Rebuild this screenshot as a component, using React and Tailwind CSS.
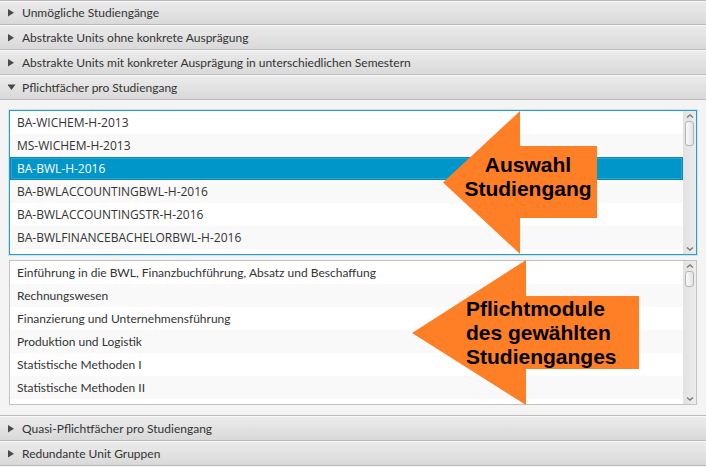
import { useState } from "react";
import clsx from "clsx";

const programmes = [
  "BA-WICHEM-H-2013",
  "MS-WICHEM-H-2013",
  "BA-BWL-H-2016",
  "BA-BWLACCOUNTINGBWL-H-2016",
  "BA-BWLACCOUNTINGSTR-H-2016",
  "BA-BWLFINANCEBACHELORBWL-H-2016",
];

const modules = [
  "Einführung in die BWL, Finanzbuchführung, Absatz und Beschaffung",
  "Rechnungswesen",
  "Finanzierung und Unternehmensführung",
  "Produktion und Logistik",
  "Statistische Methoden I",
  "Statistische Methoden II",
];

function TitledPane({ title, open = false, children }) {
  return (
    <section className="group">
      <h2>
        <button
          type="button"
          aria-expanded={open}
          className="flex h-[25px] w-full items-center border-b border-[#bdb9bd] bg-linear-to-b from-[#ececec] to-[#d9d9d9] pt-0.5 pl-2 text-left shadow-[inset_0_1px_0_#f8f8f8] group-first:border-t group-first:pt-px"
        >
          <svg viewBox="0 0 8 8" className="mr-1.5 size-2 shrink-0 fill-[#4a4a4a]" aria-hidden="true">
            {open ? <path d="M-0.5 0.5H7.5L3.5 6Z" /> : <path d="M0 0V7.5L6 3.75Z" />}
          </svg>
          <span>{title}</span>
        </button>
      </h2>
      {open && <div className="border-b border-[#bdb9bd]">{children}</div>}
    </section>
  );
}

function ScrollBar({ thumbClass }) {
  const button = "flex h-2.5 w-full shrink-0 items-center justify-center";
  const chevron = "h-1 w-2 fill-none stroke-[#7c7c7c] stroke-[1.4]";
  return (
    <div className="flex w-[13px] shrink-0 flex-col items-center bg-linear-to-r from-[#e2e2e2] to-[#ececec]">
      <button type="button" aria-label="Nach oben" className={button}>
        <svg viewBox="0 0 8 4" className={chevron}><path d="M1 3.5L4 1L7 3.5" /></svg>
      </button>
      <div className="w-full flex-1 px-0.5">
        <div className={clsx("rounded-[3px] border border-[#b5b5b5] bg-linear-to-r from-[#fafafa] to-[#e2e2e2]", thumbClass)} />
      </div>
      <button type="button" aria-label="Nach unten" className={button}>
        <svg viewBox="0 0 8 4" className={chevron}><path d="M1 0.5L4 3L7 0.5" /></svg>
      </button>
    </div>
  );
}

function ListView({ label, items, selected, onSelect, focused, listClass, thumbClass, children }) {
  return (
    <div
      className={clsx(
        "relative flex border bg-white",
        focused ? "border-[#2f9cc4] shadow-[0_0_0_1px_#c5e6f2]" : "border-[#c4c0c4]",
      )}
    >
      <ul role="listbox" aria-label={label} className={clsx("min-w-0 flex-1 pb-[5px]", listClass)}>
        {items.map((item) => (
          <li
            key={item}
            role="option"
            aria-selected={item === selected}
            onClick={() => onSelect?.(item)}
            className={clsx(
              "flex h-[23px] items-center truncate px-[7px]",
              item === selected
                ? "bg-[#0096c9] text-white shadow-[inset_0_0_0_1px_#0a87b3,inset_0_0_0_2px_#2ba6d0]"
                : "odd:bg-white even:bg-[#f9f9f9]",
            )}
          >
            {item}
          </li>
        ))}
      </ul>
      <ScrollBar thumbClass={thumbClass} />
      {children}
    </div>
  );
}

export default function App() {
  const [programme, setProgramme] = useState("BA-BWL-H-2016");

  return (
    <main className="min-h-screen bg-[#f4f4f4] font-[Lato,'Noto_Sans',sans-serif] text-[12px] leading-4 text-[#333333]">
      <TitledPane title="Unmögliche Studiengänge" />
      <TitledPane title="Abstrakte Units ohne konkrete Ausprägung" />
      <TitledPane title="Abstrakte Units mit konkreter Ausprägung in unterschiedlichen Semestern" />
      <TitledPane title="Pflichtfächer pro Studiengang" open>
        <div className="flex flex-col gap-[5px] px-[9px] py-2.5">
          <ListView
            label="Studiengang"
            items={programmes}
            selected={programme}
            onSelect={setProgramme}
            focused
            listClass="font-['Open_Sans','Noto_Sans',sans-serif]"
            thumbClass="h-[25px]"
          >
            <div className="pointer-events-none absolute top-0 right-[99px] h-[143px] w-[154px]">
              <svg viewBox="0 0 154 143" className="absolute inset-0 size-full fill-[#ff7f27]" aria-hidden="true">
                <path d="M0 71.5L77 0V35H154V107H77V143Z" />
              </svg>
              <p className="relative pt-[42px] pl-4 text-center font-['Liberation_Sans',Arial,sans-serif] text-[21px] leading-6 font-bold text-black">
                Auswahl
                <br />
                Studiengang
              </p>
            </div>
          </ListView>
          <ListView label="Pflichtmodule" items={modules} thumbClass="h-4">
            <div className="pointer-events-none absolute -top-px right-[57px] h-[145px] w-[227px]">
              <svg viewBox="0 0 227 145" className="absolute inset-0 size-full fill-[#ff7f27]" aria-hidden="true">
                <path d="M0 73L114 0V36H227V109H114V145Z" />
              </svg>
              <p className="relative pt-[37px] pl-[54px] font-['Liberation_Sans',Arial,sans-serif] text-[21px] leading-6 font-bold text-black">
                Pflichtmodule
                <br />
                des gewählten
                <br />
                Studienganges
              </p>
            </div>
          </ListView>
        </div>
      </TitledPane>
      <TitledPane title="Quasi-Pflichtfächer pro Studiengang" />
      <TitledPane title="Redundante Unit Gruppen" />
    </main>
  );
}
